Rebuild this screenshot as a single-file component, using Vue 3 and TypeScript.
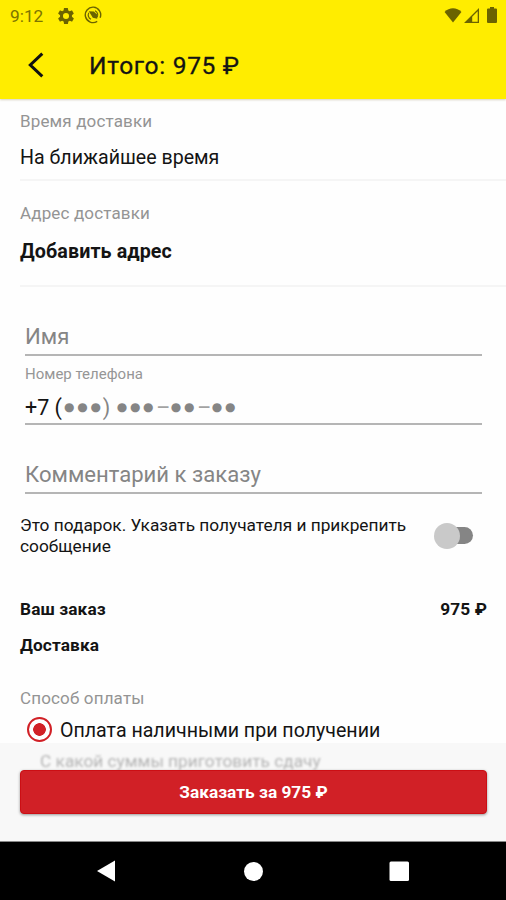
<script setup lang="ts">
import { ref } from 'vue'

interface OrderLine {
  title: string
  price: string
}

const total = '975 ₽'
const lines: OrderLine[] = [
  { title: 'Ваш заказ', price: total },
  { title: 'Доставка', price: '' },
]
const isGift = ref(false)
</script>

<template>
  <div class="screen">
    <header class="header">
      <div class="status">
        <span class="clock">9:12</span>
        <svg class="gear" viewBox="2 2 20 20"><path fill-rule="evenodd" d="M19.400 13a7.500 7.500 0 0 0 0-2l2.100-1.700a.5.5 0 0 0 .1-.6l-2-3.500a.5.5 0 0 0-.6-.2l-2.500 1a7.300 7.300 0 0 0-1.700-1l-.4-2.600a.5.5 0 0 0-.5-.4h-4a.5.5 0 0 0-.5.400L9 5a7.300 7.300 0 0 0-1.700 1L4.900 5a.5.5 0 0 0-.6.200l-2 3.500a.5.5 0 0 0 .1.600L4.600 11a7.500 7.500 0 0 0 0 2l-2.200 1.700a.5.5 0 0 0-.1.600l2 3.500a.5.5 0 0 0 .6.200l2.500-1a7.300 7.300 0 0 0 1.700 1l.4 2.600a.5.5 0 0 0 .5.400h4a.5.5 0 0 0 .5-.4l.4-2.600a7.300 7.300 0 0 0 1.700-1l2.500 1a.5.5 0 0 0 .6-.2l2-3.500a.5.5 0 0 0-.1-.6zM12 15.800a3.800 3.800 0 1 1 0-7.600 3.800 3.800 0 0 1 0 7.600z" /></svg>
        <svg class="sync" viewBox="0 0 18 18"><path class="ring" d="M13.200 15.300A7.700 7.700 0 1 1 16.100 11.800" /><path class="ring thin" d="M7 13.300A4.800 4.800 0 0 1 4.800 6.700M11 4.700A4.800 4.800 0 0 1 13.200 11.300" /><path d="M4.800 5.200 9.800 5.600 13.200 8.500 13.200 12.800 8.800 11.800z" /></svg>
        <span class="spacer"></span>
        <svg class="wifi" viewBox="0 0 18 16"><path d="M0 4.200C5-.9 13-.9 18 4.200L9 15.500z" /></svg>
        <svg class="signal" viewBox="0 0 15 15"><path fill-rule="evenodd" d="M15 0v15H0zM13.700 3.200 8.200 8.700v5.100h5.500z" /></svg>
        <svg class="battery" viewBox="0 0 10 16"><path d="M3 0h4v1.500h2a1 1 0 0 1 1 1V15a1 1 0 0 1-1 1H1a1 1 0 0 1-1-1V2.500a1 1 0 0 1 1-1h2z" /></svg>
      </div>
      <div class="bar">
        <svg class="back" viewBox="0 0 16 26"><path d="M14.300 1.600 2.300 13l12 11.400" /></svg>
        <h1 class="title">Итого: {{ total }}</h1>
      </div>
    </header>

    <main class="content">
      <section class="block time">
        <span class="caption">Время доставки</span>
        <span class="value">На ближайшее время</span>
      </section>
      <section class="block address">
        <span class="caption">Адрес доставки</span>
        <span class="value strong">Добавить адрес</span>
      </section>

      <form class="fields">
        <div class="field"><span class="hint">Имя</span></div>
        <div class="field">
          <span class="label">Номер телефона</span>
          <span class="mask"><span class="typed">+7 (</span><i>●●●</i><span class="paren">)</span><i>●●●</i><b>–</b><i>●●</i><b>–</b><i>●●</i></span>
        </div>
        <div class="field"><span class="hint">Комментарий к заказу</span></div>
      </form>

      <div class="gift">
        <p class="gift-text">Это подарок. Указать получателя и прикрепить<br />сообщение</p>
        <button class="switch" :class="{ on: isGift }" type="button" @click="isGift = !isGift"><span class="thumb"></span></button>
      </div>

      <div class="summary">
        <div v-for="line in lines" :key="line.title" class="line">
          <span>{{ line.title }}</span><span>{{ line.price }}</span>
        </div>
      </div>

      <div class="pay-caption"><span class="caption">Способ оплаты</span></div>
      <div class="radio-row">
        <span class="radio"></span>
        <span class="radio-text">Оплата наличными при получении</span>
      </div>
    </main>

    <footer class="footer">
      <div class="change"><span class="change-text">С какой суммы приготовить сдачу</span></div>
      <button class="order" type="button">Заказать за {{ total }}</button>
    </footer>

    <nav class="nav">
      <svg viewBox="0 0 506 58"><path d="M97 29 115 18.500v21z" /><circle cx="253.500" cy="29.500" r="9.500" /><rect x="389.500" y="19.500" width="19.500" height="19.500" rx="1.500" /></svg>
    </nav>
  </div>
</template>

<style>
body {
  margin: 0;
  background: #fefefe;
}
</style>

<style scoped>
* {
  box-sizing: border-box;
}
.screen {
  width: 506px;
  height: 900px;
  display: flex;
  flex-direction: column;
  overflow: hidden;
  background: #fefefe;
  color: #141414;
  font-family: Roboto, 'Liberation Sans', sans-serif;
  white-space: nowrap;
}
.header {
  height: 99px;
  flex: none;
  background: #ffed00;
  box-shadow: 0 1px 2px rgba(90, 70, 0, 0.25);
}
.status {
  height: 32px;
  display: flex;
  align-items: center;
  padding: 0 9px 0 10px;
  color: #7d7400;
}
.status svg {
  fill: #6b6300;
}
.clock {
  width: 48px;
  font-size: 17.3px;
}
.gear {
  width: 16px;
  height: 16px;
}
.sync {
  width: 18px;
  height: 18px;
  margin: 0 0 2px 10px;
}
.status .ring {
  fill: none;
  stroke: #6b6300;
  stroke-width: 1.4;
}
.status .thin {
  stroke-width: 1.1;
}
.spacer {
  flex: 1;
}
.wifi {
  width: 18px;
  height: 15px;
  margin-bottom: 2px;
}
.signal {
  width: 15px;
  height: 15px;
  margin: 0 8px 1px 2px;
}
.battery {
  width: 10px;
  height: 16px;
  margin-bottom: 2px;
}
.bar {
  height: 67px;
  display: flex;
  align-items: center;
  padding: 0 0 2px 28px;
}
.back {
  width: 16px;
  height: 26px;
  fill: none;
  stroke: #111;
  stroke-width: 3;
}
.title {
  margin: 2px 0 0 45px;
  font-size: 24.5px;
  font-weight: 400;
  line-height: 30px;
  letter-spacing: 0.7px;
  -webkit-text-stroke: 0.3px #141414;
}
.content {
  height: 644px;
  flex: none;
}
.block {
  margin-left: 20px;
  border-bottom: 2px solid #f5f5f5;
}
.time {
  height: 82px;
  padding-top: 12px;
}
.address {
  height: 106px;
  padding-top: 22px;
}
.caption {
  display: block;
  font-size: 17px;
  line-height: 20px;
  letter-spacing: 0.15px;
  color: #949494;
}
.value {
  display: block;
  margin-top: 15px;
  font-size: 19.6px;
  line-height: 24px;
}
.strong {
  margin-top: 17px;
  font-size: 19.7px;
  font-weight: 700;
  letter-spacing: 0.1px;
}
.fields {
  padding: 0 24px 0 25px;
}
.field {
  height: 69px;
  display: flex;
  flex-direction: column;
  justify-content: flex-end;
  border-bottom: 2px solid #b5b5b5;
}
.hint {
  font-size: 22.1px;
  line-height: 26px;
  margin-bottom: 5px;
  color: #858585;
}
.label {
  font-size: 15px;
  line-height: 16px;
  color: #969696;
}
.mask {
  display: flex;
  align-items: center;
  height: 24px;
  margin: 13px 0 4px;
  font-size: 21.5px;
  color: #858585;
}
.mask i {
  font: normal 12px/24px 'DejaVu Sans', sans-serif;
  letter-spacing: 2.75px;
}
.mask b {
  width: 14.5px;
  padding-right: 2px;
  text-align: center;
  font-weight: 400;
  color: #a2a2a2;
}
.typed {
  color: #141414;
  width: 39px;
}
.paren {
  width: 13px;
  margin-left: -1px;
  margin-right: 1px;
}
.gift {
  height: 87px;
  display: flex;
  padding: 21px 32px 0 20px;
  justify-content: space-between;
}
.gift-text {
  margin: 0;
  font-size: 17.3px;
  line-height: 20.6px;
}
.switch {
  width: 40px;
  height: 27px;
  padding: 0;
  margin-top: 7px;
  border: 0;
  display: flex;
  align-items: center;
  background: none;
  position: relative;
}
.switch::before {
  content: '';
  position: absolute;
  left: 6px;
  top: 5px;
  width: 33px;
  height: 17px;
  border-radius: 9px;
  background: #858585;
}
.thumb {
  position: relative;
  width: 26px;
  height: 26px;
  border-radius: 50%;
  background: #c9c9c9;
}
.on .thumb {
  margin-left: 14px;
  background: #d12026;
}
.summary {
  padding: 10px 19px 0 20px;
}
.line {
  height: 36px;
  display: flex;
  justify-content: space-between;
  align-items: center;
  font-size: 17.3px;
  font-weight: 700;
  letter-spacing: 0.1px;
}
.pay-caption {
  padding: 25px 0 0 20px;
}
.radio-row {
  display: flex;
  align-items: center;
  height: 34px;
  margin-top: 5px;
  padding-left: 27px;
}
.radio {
  width: 25px;
  height: 25px;
  flex: none;
  margin-bottom: 2px;
  border: 2px solid #d12026;
  border-radius: 50%;
  background: radial-gradient(circle, #d12026 6px, transparent 6.6px);
}
.radio-text {
  margin-left: 8px;
  font-size: 19.6px;
}
.footer {
  height: 99px;
  flex: none;
  background: #f8f8f8;
  border-bottom: 1px solid #888;
}
.change {
  height: 27px;
  padding: 7px 0 0 40px;
}
.change-text {
  display: block;
  font-size: 17.3px;
  line-height: 22px;
  color: #b4b4b4;
  filter: blur(1.3px);
}
.order {
  position: relative;
  display: block;
  width: 467px;
  height: 44px;
  margin-left: 20px;
  padding: 0;
  border: 1px solid #cc0e14;
  border-radius: 4px;
  background: #d12026;
  box-shadow: 0 1px 3px rgba(0, 0, 0, 0.4);
  color: #fff;
  font: 700 17.3px/43px Roboto, sans-serif;
}
.nav {
  height: 58px;
  flex: none;
  background: #000;
}
.nav svg {
  display: block;
  width: 506px;
  height: 58px;
  fill: #fff;
}
</style>
